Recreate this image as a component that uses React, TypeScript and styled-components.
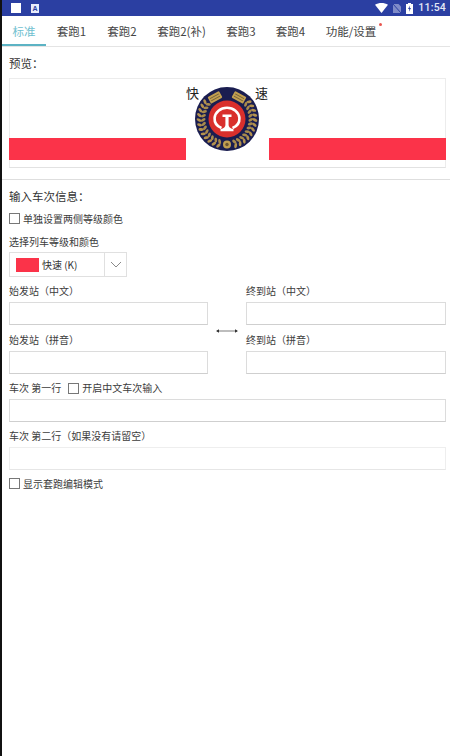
import styled, { createGlobalStyle } from 'styled-components';

const GlobalStyle = createGlobalStyle`
  html, body {
    margin: 0;
    padding: 0;
    background: #fff;
  }
  * {
    box-sizing: border-box;
  }
`;

const Page = styled.div`
  width: 450px;
  height: 756px;
  overflow: hidden;
  background: #fff;
  border-left: 2px solid #111;
  font-family: 'Noto Sans CJK SC', 'Liberation Sans', sans-serif;
  color: #333;
  font-size: 10px;
`;

const StatusBar = styled.div`
  height: 16px;
  padding: 0 4px 0 9px;
  background: #2b3fa2;
  display: flex;
  align-items: center;
  color: #e4e8f6;
`;

const WhiteSquare = styled.div`
  width: 10px;
  height: 10px;
  background: #fff;
  margin-right: 10px;
`;

const AppGlyph = styled.div`
  width: 8px;
  height: 9px;
  background: #e8ecfa;
  color: #2b3fa2;
  font: 700 7px/9px 'Liberation Sans', sans-serif;
  text-align: center;
`;

const StatusRight = styled.div`
  margin-left: auto;
  display: flex;
  align-items: center;
  gap: 5px;
  font: 500 10.5px/16px Roboto, sans-serif;
  letter-spacing: 0.2px;
`;

const TabBar = styled.div`
  height: 31px;
  display: flex;
  border-bottom: 1px solid #e4e4e4;
`;

const Tab = styled.div<{ $active?: boolean; $width: number }>`
  position: relative;
  width: ${(p) => p.$width}px;
  height: 30px;
  padding-top: 5px;
  text-align: center;
  font-size: 11.5px;
  line-height: 20px;
  color: ${(p) => (p.$active ? '#6fc0cf' : '#444')};
  border-bottom: 2px solid ${(p) => (p.$active ? '#5cb3c4' : 'transparent')};
`;

const Dot = styled.span`
  position: absolute;
  right: 5px;
  top: 7px;
  width: 3px;
  height: 3px;
  border-radius: 50%;
  background: #e8554f;
`;

const SectionLabel = styled.div`
  height: 16px;
  line-height: 16px;
  font-size: 11.5px;
  color: #333;
`;

const PreviewWrap = styled.div`
  padding: 8px 4px 0 7px;
`;

const Preview = styled.div`
  height: 90px;
  margin-top: 7px;
  border: 1px solid #ececec;
  border-bottom-color: #e2e2e2;
  position: relative;
`;

const Bars = styled.div`
  position: absolute;
  left: -1px;
  right: -1px;
  top: 59px;
  display: flex;
  justify-content: space-between;
`;

const RedBar = styled.div`
  width: 177px;
  height: 22px;
  background: #fb3349;
`;

const Badge = styled.div`
  position: absolute;
  left: 185px;
  top: 8px;
  width: 64px;
  height: 64px;
`;

const LogoChar = styled.span<{ $left: number }>`
  position: absolute;
  top: 6px;
  left: ${(p) => p.$left}px;
  font-size: 13px;
  line-height: 16px;
  color: #222;
`;

const Divider = styled.div`
  height: 1px;
  background: #dedede;
  margin-top: 11px;
`;

const Form = styled.div`
  padding: 8px 4px 0 7px;
`;

const Small = styled.div`
  font-size: 10px;
  line-height: 14px;
  color: #3c3c3c;
`;

const CheckRow = styled.div<{ $top?: number }>`
  display: flex;
  align-items: center;
  gap: 3px;
  height: 14px;
  margin-top: ${(p) => p.$top ?? 0}px;
  font-size: 10px;
  color: #3c3c3c;
`;

const Box = styled.span`
  display: inline-block;
  width: 11px;
  height: 11px;
  border: 1px solid #777;
  background: #fff;
`;

const ComboLabel = styled(Small)`
  margin-top: 10px;
`;

const Combo = styled.div`
  width: 118px;
  height: 25px;
  margin-top: 3px;
  border: 1px solid #e0e0e0;
  display: flex;
  align-items: center;
`;

const ComboValue = styled.div`
  width: 94px;
  height: 100%;
  display: flex;
  align-items: center;
  padding-left: 6px;
  gap: 3px;
  font-size: 10px;
  color: #333;
`;

const Swatch = styled.span`
  width: 23px;
  height: 14px;
  background: #fb3349;
`;

const ComboArrow = styled.div`
  flex: 1;
  height: 100%;
  border-left: 1px solid #e0e0e0;
  display: flex;
  align-items: center;
  justify-content: center;
`;

const StationGrid = styled.div`
  display: grid;
  grid-template-columns: 199px 38px 200px;
  margin-top: 7px;
`;

const Column = styled.div`
  display: flex;
  flex-direction: column;
`;

const ArrowCell = styled.div`
  display: flex;
  align-items: center;
  justify-content: center;
  padding-bottom: 4px;
`;

const FieldLabel = styled(Small)`
  height: 14px;
`;

const Field = styled.div<{ $gap?: number; $faint?: boolean }>`
  height: 23px;
  margin: 4px 0 ${(p) => p.$gap ?? 7}px;
  border: 1px solid ${(p) => (p.$faint ? '#eeeeee' : '#dcdcdc')};
  border-bottom-color: ${(p) => (p.$faint ? '#e6e6e6' : '#cfcfcf')};
  background: #fff;
`;

const RowLabel = styled(Small)`
  display: flex;
  align-items: center;
  gap: 7px;
`;

const LabelCheck = styled.span`
  display: inline-flex;
  align-items: center;
  gap: 3px;
`;

const Arrow = () => (
  <svg width="22" height="6" viewBox="0 0 22 6">
    <path d="M1 3H21" stroke="#444" strokeWidth="0.7" fill="none" />
    <path d="M0 3L3 1.3V4.7Z M22 3L19 1.3V4.7Z" fill="#333" />
  </svg>
);

const Chevron = () => (
  <svg width="12" height="7" viewBox="0 0 12 7">
    <path d="M1 1L6 6L11 1" stroke="#8a8a8a" strokeWidth="1" fill="none" />
  </svg>
);

const Wifi = () => (
  <svg width="13" height="10" viewBox="0 0 13 10">
    <path d="M0 1.8C3.6 -0.6 9.4 -0.6 13 1.8L6.5 10Z" fill="#fff" />
  </svg>
);

const NoSim = () => (
  <svg width="8" height="10" viewBox="0 0 8 10">
    <path d="M0 1H5.5L8 3.5V10H0Z" fill="#7f8bc8" />
    <path d="M0 1L8 10" stroke="#2b3fa2" strokeWidth="1" />
  </svg>
);

const Battery = () => (
  <svg width="7" height="11" viewBox="0 0 7 11">
    <path d="M2 0H5V1H7V11H0V1H2Z" fill="#fff" />
    <path d="M4 2.5L2 6H3.3L3 8.7L5 5H3.7Z" fill="#2b3fa2" />
  </svg>
);

const wreathAngles = [52, 62, 72, 82, 92, 102, 112, 122, 132, 142, 152, 162];

const Grain = ({ angle }: { angle: number }) => (
  <g transform={`rotate(${angle} 32 32)`}>
    <ellipse cx="32" cy="4" rx="1.4" ry="2.6" fill="#b3924f" transform="rotate(30 32 4)" />
    <ellipse cx="32" cy="8.2" rx="1.4" ry="2.6" fill="#a88a4c" transform="rotate(-30 32 8.2)" />
  </g>
);

const Panel = ({ angle }: { angle: number }) => (
  <g transform={`rotate(${angle} 32 32)`}>
    <rect x="25.5" y="3.5" width="13" height="7.5" rx="1" fill="#c29f50" />
    <path d="M27 6H37M27 8.5H37" stroke="#74603a" strokeWidth="0.9" />
  </g>
);

const RailwayBadge = () => (
  <svg width="64" height="64" viewBox="0 0 64 64">
    <circle cx="32" cy="32" r="32" fill="#1a1d50" />
    {wreathAngles.map((a) => (
      <Grain key={a} angle={a} />
    ))}
    {wreathAngles.map((a) => (
      <Grain key={-a} angle={-a} />
    ))}
    <Panel angle={-29} />
    <Panel angle={29} />
    <circle cx="32" cy="57.5" r="4" fill="#c29f50" />
    <circle cx="32" cy="57.5" r="1.7" fill="#6b5430" />
    <circle cx="32" cy="32" r="18.5" fill="#d92f2c" />
    <path
      d="M26.5 41C21.5 39 19.3 35.5 19.6 31C20.1 25 25.5 20.8 32 20.8C38.5 20.8 43.9 25 44.4 31C44.7 35.5 42.5 39 37.5 41"
      fill="none"
      stroke="#fff"
      strokeWidth="2.6"
    />
    <path
      d="M27.5 27.5H36.5V30H33.6V38C33.6 40 35 41.3 38.5 42.3V44.3H25.5V42.3C29 41.3 30.4 40 30.4 38V30H27.5Z"
      fill="#fff"
    />
  </svg>
);

const tabs = [
  { name: '标准', width: 44 },
  { name: '套跑1', width: 51 },
  { name: '套跑2', width: 50 },
  { name: '套跑2(补)', width: 69 },
  { name: '套跑3', width: 50 },
  { name: '套跑4', width: 49 },
  { name: '功能/设置', width: 72 },
];

function App() {
  return (
    <Page>
      <GlobalStyle />
      <StatusBar>
        <WhiteSquare />
        <AppGlyph>A</AppGlyph>
        <StatusRight>
          <Wifi />
          <NoSim />
          <Battery />
          <span>11:54</span>
        </StatusRight>
      </StatusBar>
      <TabBar>
        {tabs.map((t, i) => (
          <Tab key={t.name} $active={i === 0} $width={t.width}>
            {t.name}
            {i === tabs.length - 1 && <Dot />}
          </Tab>
        ))}
      </TabBar>
      <PreviewWrap>
        <SectionLabel>预览：</SectionLabel>
        <Preview>
          <Bars>
            <RedBar />
            <RedBar />
          </Bars>
          <LogoChar $left={176}>快</LogoChar>
          <LogoChar $left={245}>速</LogoChar>
          <Badge>
            <RailwayBadge />
          </Badge>
        </Preview>
      </PreviewWrap>
      <Divider />
      <Form>
        <SectionLabel>输入车次信息：</SectionLabel>
        <CheckRow $top={7}>
          <Box />
          单独设置两侧等级颜色
        </CheckRow>
        <ComboLabel>选择列车等级和颜色</ComboLabel>
        <Combo>
          <ComboValue>
            <Swatch />
            快速 (K)
          </ComboValue>
          <ComboArrow>
            <Chevron />
          </ComboArrow>
        </Combo>
        <StationGrid>
          <Column>
            <FieldLabel>始发站（中文）</FieldLabel>
            <Field $gap={8} />
            <FieldLabel>始发站（拼音）</FieldLabel>
            <Field />
          </Column>
          <ArrowCell>
            <Arrow />
          </ArrowCell>
          <Column>
            <FieldLabel>终到站（中文）</FieldLabel>
            <Field $gap={8} />
            <FieldLabel>终到站（拼音）</FieldLabel>
            <Field />
          </Column>
        </StationGrid>
        <RowLabel>
          车次 第一行
          <LabelCheck>
            <Box />
            开启中文车次输入
          </LabelCheck>
        </RowLabel>
        <Field />
        <RowLabel>车次 第二行（如果没有请留空）</RowLabel>
        <Field $faint $gap={6} />
        <CheckRow>
          <Box />
          显示套跑编辑模式
        </CheckRow>
      </Form>
    </Page>
  );
}

export default App;
